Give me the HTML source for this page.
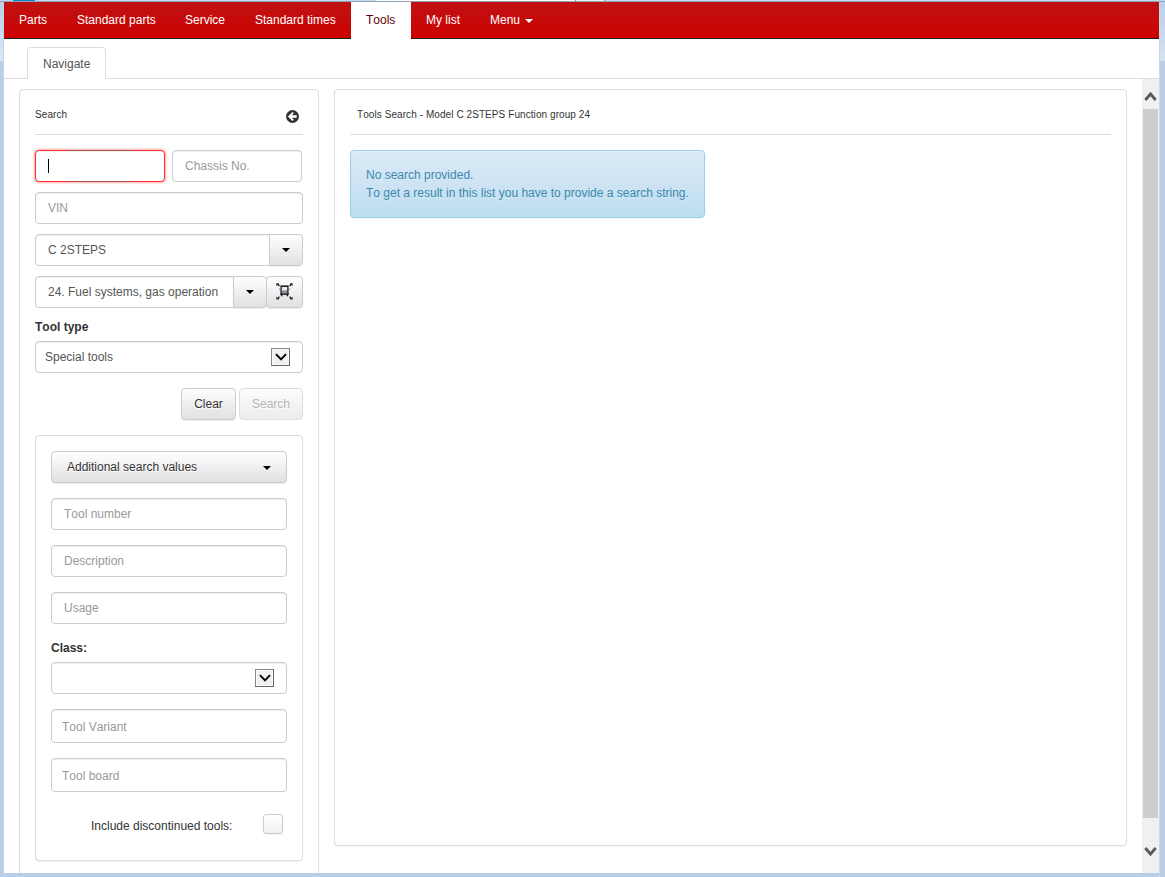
<!DOCTYPE html>
<html>
<head>
<meta charset="utf-8">
<title>Tools</title>
<style>
*{box-sizing:border-box;}
html,body{margin:0;padding:0;}
body{width:1165px;height:877px;overflow:hidden;position:relative;background:#b9cfe7;font-family:"Liberation Sans",sans-serif;font-size:12px;color:#333;font-kerning:none;}
.abs{position:absolute;}
#frameL{left:3px;top:0;width:1px;height:877px;background:#bdd4ee;}
#frameLtop{left:0;top:0;width:3px;height:61px;background:linear-gradient(#bad0e7,#c6d8ec 40%,#dfe8f2);}
#frameR{left:1159px;top:0;width:1px;height:877px;background:#c6dbf1;}
#frameRtop{left:1160px;top:0;width:5px;height:61px;background:linear-gradient(#bad0e7,#c4d6eb 40%,#d6e3f0);}
#topstrip{left:0;top:0;width:1165px;height:2px;background:linear-gradient(#c2d9f1 50%,#94a3b4 50%);}
#topblue{left:13px;top:0;width:22px;height:1px;background:#0a7fd0;}
#topwhite{left:376px;top:0;width:229px;height:1px;background:linear-gradient(90deg,#fdfdfd 199px,#7f8b99 199px,#7f8b99 200px,#eef5fc 200px,#eef5fc 228px,#8c99a8 228px);}
#page{left:4px;top:2px;width:1155px;height:871px;background:#fff;overflow:hidden;}
/* navbar */
#nav{left:0;top:0;width:1155px;height:37px;background:linear-gradient(#be1212,#c70a0a 50%,#cc0000);border-bottom:1px solid #202020;}
#nav .it{position:absolute;top:0;height:36px;line-height:36px;color:#fff;font-size:12px;white-space:nowrap;}
#nav .act{position:absolute;left:347px;top:0;width:60px;height:37px;background:#fff;color:#680000;line-height:36px;padding-left:15px;font-size:12px;}
.caretw{display:inline-block;width:0;height:0;border-top:4px solid #fff;border-left:4px solid transparent;border-right:4px solid transparent;vertical-align:middle;margin-left:2px;}
/* tab */
#tabline{left:0;top:76px;width:1155px;height:1px;background:#ddd;}
#tab{left:23px;top:45px;width:79px;height:32px;border:1px solid #ddd;border-bottom:1px solid #fff;border-radius:4px 4px 0 0;background:#fff;color:#555;line-height:33px;padding-left:15px;font-size:12px;}
/* panels */
.panel{position:absolute;background:#fff;border:1px solid #ddd;border-radius:4px;box-shadow:0 1px 1px rgba(0,0,0,.05);}
.hr{position:absolute;height:1px;background:#ddd;}
.inp{position:absolute;height:32px;border:1px solid #ccc;border-radius:4px;background:#fff;box-shadow:inset 0 1px 1px rgba(0,0,0,.075);color:#999;font-size:12px;line-height:30px;padding-left:12px;white-space:nowrap;overflow:hidden;}
.inp.val{color:#555;}
.btn{position:absolute;height:32px;border:1px solid #ccc;border-radius:4px;background:linear-gradient(#fff,#e0e0e0);box-shadow:inset 0 1px 0 rgba(255,255,255,.15),0 1px 1px rgba(0,0,0,.075);color:#333;font-size:12px;line-height:30px;text-align:center;text-shadow:0 1px 0 #fff;}
.caretb{position:absolute;width:0;height:0;border-top:4px solid #000;border-left:4px solid transparent;border-right:4px solid transparent;}
.selbox{position:absolute;width:19px;height:18px;border:1px solid;border-color:#858585 #666 #666 #858585;background:#f0f0f0;box-shadow:inset 0 0 0 1px #fbfbfb;}
.lbl{position:absolute;font-weight:bold;font-size:12px;color:#333;white-space:nowrap;}
.t10{position:absolute;font-size:10px;color:#333;white-space:nowrap;letter-spacing:0.075px;}
</style>
</head>
<body>
<div class="abs" id="frameLtop"></div>
<div class="abs" id="frameL"></div>
<div class="abs" id="frameR"></div>
<div class="abs" id="frameRtop"></div>
<div class="abs" id="topstrip"></div>
<div class="abs" id="topblue"></div>
<div class="abs" id="topwhite"></div>

<div class="abs" id="page">
  <!-- NAVBAR -->
  <div class="abs" id="nav">
    <div class="it" style="left:15px;">Parts</div>
    <div class="it" style="left:73px;">Standard parts</div>
    <div class="it" style="left:181px;">Service</div>
    <div class="it" style="left:251px;">Standard times</div>
    <div class="act">Tools</div>
    <div class="it" style="left:422px;">My list</div>
    <div class="it" style="left:486px;">Menu <span class="caretw"></span></div>
  </div>

  <!-- TAB -->
  <div class="abs" id="tabline"></div>
  <div class="abs" id="tab">Navigate</div>

  <!-- LEFT PANEL -->
  <div class="panel" style="left:15px;top:87px;width:300px;height:800px;"></div>
  <div class="t10" style="left:31px;top:107px;">Search</div>
  <svg class="abs" style="left:282px;top:108px;" width="13" height="13" viewBox="0 0 13 13">
    <circle cx="6.5" cy="6.5" r="6.5" fill="#333"/>
    <path d="M1.9 6.45 L6.5 1.9 L7.8 3.2 L5.8 5.2 L10.7 5.2 L10.7 7.7 L5.8 7.7 L7.8 9.7 L6.5 11 Z" fill="#fff"/>
  </svg>
  <div class="hr" style="left:31px;top:132px;width:268px;"></div>

  <div class="inp" style="left:31px;top:148px;width:130px;border-color:#f33;box-shadow:inset 0 1px 1px rgba(0,0,0,.075),0 0 3px rgba(255,40,40,.8);"></div>
  <div class="abs" style="left:44px;top:157px;width:1px;height:14px;background:#000;"></div>
  <div class="abs" style="left:64px;top:148px;width:64px;height:1px;background:#b45252;"></div>
  <div class="abs" style="left:64px;top:179px;width:64px;height:1px;background:#b45252;"></div>
  <div class="inp" style="left:168px;top:148px;width:130px;">Chassis No.</div>
  <div class="inp" style="left:31px;top:190px;width:268px;">VIN</div>

  <div class="inp val" style="left:31px;top:232px;width:235px;border-radius:4px 0 0 4px;">C 2STEPS</div>
  <div class="btn" style="left:265px;top:232px;width:34px;border-radius:0 4px 4px 0;"><span class="caretb" style="left:12px;top:13px;"></span></div>

  <div class="inp val" style="left:31px;top:274px;width:199px;border-radius:4px 0 0 4px;">24. Fuel systems, gas operation</div>
  <div class="btn" style="left:229px;top:274px;width:34px;border-radius:0 4px 4px 0;"><span class="caretb" style="left:12px;top:13px;"></span></div>
  <div class="btn" style="left:262px;top:274px;width:37px;">
    <svg class="abs" style="left:9px;top:6px;" width="18" height="18" viewBox="0 0 18 18">
      <g fill="#1c1c1c">
        <path d="M0.4 0.2 H3.3 L2.5 1.1 L3.9 2.5 L2.9 3.5 L1.5 2.1 L0.4 3.1 Z"/>
        <path d="M16.6 0.2 V3.1 L15.5 2.1 L14.1 3.5 L13.1 2.5 L14.5 1.1 L13.7 0.2 Z"/>
        <path d="M0.4 16.6 V13.7 L1.5 14.7 L2.9 13.3 L3.9 14.3 L2.5 15.7 L3.3 16.6 Z"/>
        <path d="M16.6 16.6 H13.7 L14.5 15.7 L13.1 14.3 L14.1 13.3 L15.5 14.7 L16.6 13.7 Z"/>
        <rect x="4.4" y="2.4" width="8.2" height="1.6"/>
        <rect x="4.4" y="4" width="1.5" height="8" fill="#2a2a48"/>
        <rect x="11.1" y="4" width="1.5" height="8" fill="#2a2a48"/>
        <rect x="3.3" y="5.6" width="1.1" height="1" fill="#555"/>
        <rect x="12.6" y="5.6" width="1.1" height="1" fill="#555"/>
        <rect x="5.9" y="4" width="5.2" height="3.4" fill="#e4ecec"/>
        <rect x="5.9" y="7.4" width="5.2" height="3" fill="#8e8e8e"/>
        <rect x="4.4" y="10.4" width="8.2" height="1.5"/>
        <rect x="4.9" y="11.9" width="1.5" height="1.4"/>
        <rect x="10.6" y="11.9" width="1.5" height="1.4"/>
      </g>
    </svg>
  </div>

  <div class="lbl" style="left:31px;top:318px;">Tool type</div>
  <div class="inp val" style="left:31px;top:339px;width:268px;padding-left:9px;">Special tools</div>
  <div class="selbox" style="left:267px;top:346px;"><svg class="abs" style="left:0;top:0;" width="17" height="16" viewBox="0 0 17 16"><path d="M4 5.1 L9 10.3 L14 5.1" fill="none" stroke="#000" stroke-width="1.9"/></svg></div>

  <div class="btn" style="left:177px;top:386px;width:55px;">Clear</div>
  <div class="btn" style="left:235px;top:386px;width:64px;color:#b5b5b5;border-color:#ddd;background:linear-gradient(#fcfcfc,#ececec);box-shadow:none;">Search</div>

  <!-- INNER PANEL -->
  <div class="panel" style="left:31px;top:433px;width:268px;height:426px;"></div>
  <div class="btn" style="left:47px;top:449px;width:236px;text-align:left;padding-left:15px;">Additional search values<span class="caretb" style="left:211px;top:14px;"></span></div>
  <div class="inp" style="left:47px;top:496px;width:236px;">Tool number</div>
  <div class="inp" style="left:47px;top:543px;width:236px;">Description</div>
  <div class="inp" style="left:47px;top:590px;width:236px;">Usage</div>
  <div class="lbl" style="left:47px;top:639px;">Class:</div>
  <div class="inp" style="left:47px;top:660px;width:236px;"></div>
  <div class="selbox" style="left:251px;top:667px;"><svg class="abs" style="left:0;top:0;" width="17" height="16" viewBox="0 0 17 16"><path d="M4 5.1 L9 10.3 L14 5.1" fill="none" stroke="#000" stroke-width="1.9"/></svg></div>
  <div class="inp" style="left:47px;top:707px;width:236px;height:34px;line-height:34px;padding-left:10px;">Tool Variant</div>
  <div class="inp" style="left:47px;top:756px;width:236px;height:34px;line-height:34px;padding-left:10px;">Tool board</div>
  <div class="abs" style="left:87px;top:817px;font-size:12px;color:#333;white-space:nowrap;">Include discontinued tools:</div>
  <div class="abs" style="left:259px;top:812px;width:20px;height:20px;border:1px solid #ccc;border-radius:3px;background:linear-gradient(#fff,#f0f0f0);box-shadow:0 1px 1px rgba(0,0,0,.05);"></div>

  <!-- RIGHT PANEL -->
  <div class="panel" style="left:330px;top:87px;width:793px;height:757px;"></div>
  <div class="t10" style="left:353px;top:107px;">Tools Search - Model C 2STEPS Function group 24</div>
  <div class="hr" style="left:346px;top:132px;width:761px;"></div>
  <div class="abs" style="left:346px;top:148px;width:355px;height:68px;border:1px solid #9acfea;border-radius:4px;background:linear-gradient(#dbebf7,#cee3f4 50%,#badff0);box-shadow:inset 0 1px 0 rgba(255,255,255,.25),0 1px 2px rgba(0,0,0,.05);color:#3a87ad;font-size:12px;line-height:18px;padding:15px 15px;text-shadow:0 1px 0 rgba(255,255,255,.2);white-space:nowrap;">No search provided.<br>To get a result in this list you have to provide a search string.</div>

  <!-- SCROLLBAR -->
  <div class="abs" style="left:1138px;top:77px;width:17px;height:794px;background:#f0f0f0;"></div>
  <div class="abs" style="left:1139px;top:107px;width:15px;height:709px;background:#cdcdcd;"></div>
  <svg class="abs" style="left:1138px;top:86px;" width="17" height="16" viewBox="0 0 17 16"><path d="M3.3 12 L8.5 6 L13.7 12" fill="none" stroke="#5a5a5a" stroke-width="2.8"/></svg>
  <svg class="abs" style="left:1138px;top:842px;" width="17" height="16" viewBox="0 0 17 16"><path d="M3.3 4 L8.5 10 L13.7 4" fill="none" stroke="#5a5a5a" stroke-width="2.8"/></svg>
</div>
</body>
</html>
